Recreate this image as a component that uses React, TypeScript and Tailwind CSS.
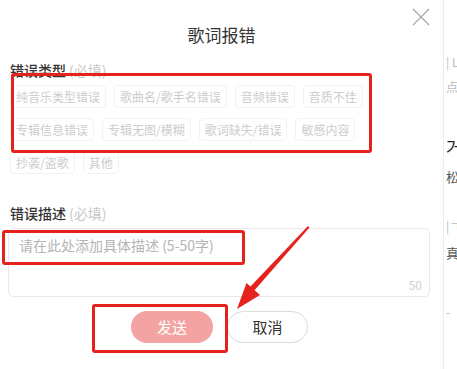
import React from "react";

const font = { fontFamily: '"Noto Sans CJK SC", "Noto Sans", sans-serif' };

const row1 = ["纯音乐类型错误", "歌曲名/歌手名错误", "音频错误", "音质不佳", "专辑信息错误", "专辑无图/模糊", "歌词缺失/错误", "敏感内容", "抄袭/盗歌", "其他"];

export default function App() {
  return (
    <div className="relative flex h-[369px] w-[457px] overflow-hidden bg-white" style={font}>
      <div className="relative flex h-full w-[444px] shrink-0 flex-col border-r border-[#ececec] pl-[10px]">
        <svg className="absolute left-[412px] top-[8px]" width="18" height="18" viewBox="0 0 18 18">
          <path d="M1 1 L17 17 M17 1 L1 17" stroke="#a8a8a8" strokeWidth="1.2" fill="none" />
        </svg>
        <div className="mt-[23px] text-center text-[17px] leading-[24px] text-[#333] pr-[10px]">歌词报错</div>
        <div className="mt-[13px] text-[14px] leading-[20px] font-medium text-[#333]">
          错误类型<span className="ml-[3px] font-normal text-[#c8c8c8]">(必填)</span>
        </div>
        <div className="mt-[5px] flex w-[380px] flex-wrap gap-x-[8px] gap-y-[10px]">
          {row1.map((t) => (
            <div key={t} className="h-[23px] rounded-[4px] border border-[#f2f2f2] px-[5px] text-[12px] leading-[21px] text-[#cdcdcd]">
              {t}
            </div>
          ))}
        </div>
        <div className="mt-[29px] text-[14px] leading-[20px] font-medium text-[#333]">
          错误描述<span className="ml-[3px] font-normal text-[#c8c8c8]">(必填)</span>
        </div>
        <div className="relative mt-[5px] ml-[-2px] h-[69px] w-[422px] rounded-[5px] border border-[#e8e8e8]">
          <div className="pl-[10px] pt-[6px] text-[14px] leading-[20px] text-[#b4b4b4]">请在此处添加具体描述 (5-50字)</div>
          <div className="absolute bottom-[3px] right-[7px] text-[12px] leading-[16px] text-[#cfcfcf]">50</div>
        </div>
        <div className="mt-[14px] flex gap-[14px] pl-[121px]">
          <div className="flex h-[32px] w-[82px] items-center justify-center rounded-full bg-[#f4a3a3] text-[15px] text-white">发送</div>
          <div className="flex h-[32px] w-[81px] items-center justify-center rounded-full border border-[#dcdcdc] text-[15px] text-[#333]">取消</div>
        </div>
      </div>
      <div className="flex flex-1 flex-col overflow-hidden pl-[2px] text-[12px] whitespace-nowrap">
        <div className="mt-[54px] leading-[16px] text-[#bbb]">| L</div>
        <div className="mt-[9px] leading-[16px] text-[#bbb]">点无</div>
        <div className="mt-[41px] text-[17px] leading-[22px] text-[#222]">거</div>
        <div className="mt-[10px] text-[13px] leading-[18px] text-[#555]">松</div>
        <div className="mt-[32px] leading-[16px] text-[#bbb]">|ㄱ</div>
        <div className="mt-[10px] text-[13px] leading-[18px] text-[#555]">真</div>
        <div className="mt-[42px] leading-[16px] text-[#bbb]">-</div>
      </div>

      <div className="pointer-events-none absolute left-[11px] top-[73px] h-[80px] w-[361px] rounded-[3px] border-[3px] border-[#e5231d]" />
      <div className="pointer-events-none absolute left-[2px] top-[230px] h-[35px] w-[243px] rounded-[3px] border-[3px] border-[#e5231d]" />
      <div className="pointer-events-none absolute left-[92px] top-[304px] h-[49px] w-[136px] rounded-[3px] border-[3px] border-[#e5231d]" />
      <svg className="pointer-events-none absolute left-0 top-0" width="457" height="369" viewBox="0 0 457 369">
        <polygon points="308,226 309.5,227.5 253,292 249,288" fill="#e5231d" />
        <polygon points="237,309 246.5,283 260,295" fill="#e5231d" />
      </svg>
    </div>
  );
}
